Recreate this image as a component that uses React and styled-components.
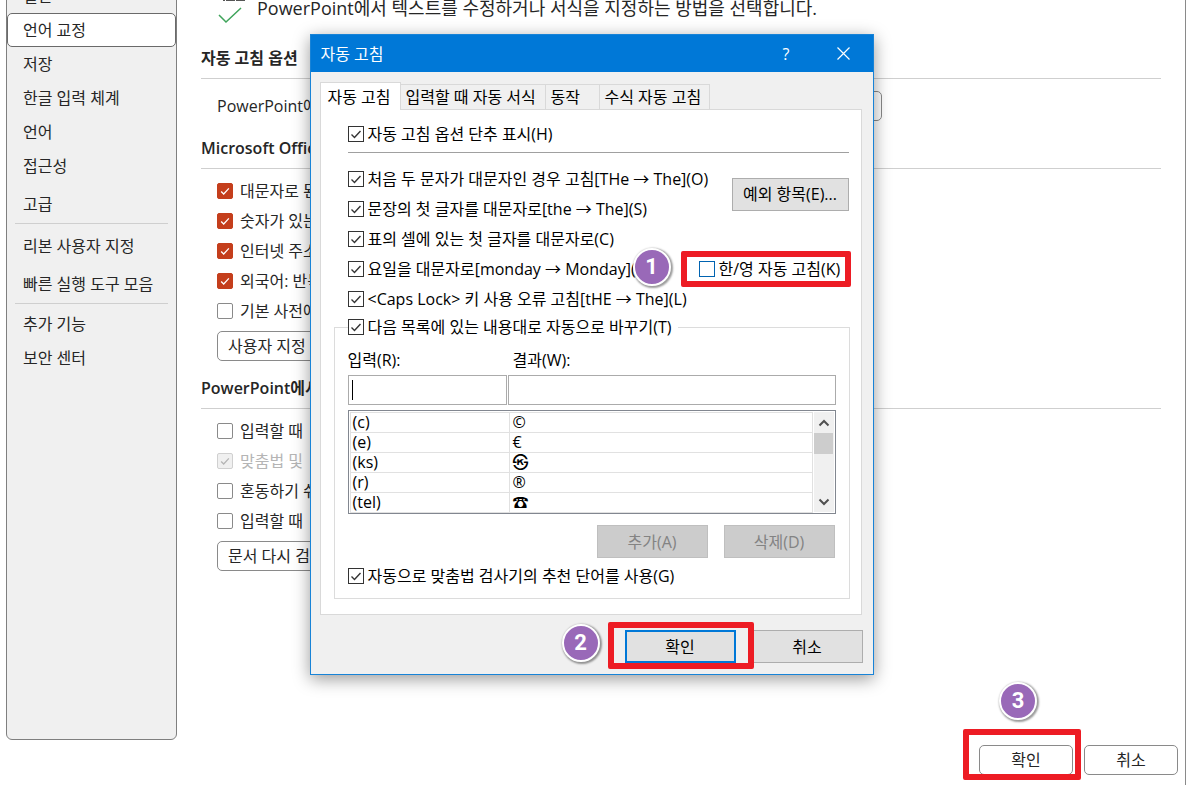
import React from 'react';
import styled, { createGlobalStyle, css } from 'styled-components';

const GlobalStyle = createGlobalStyle`
    *, *::before, *::after {
        box-sizing: border-box;
    }
    body {
        margin: 0;
        background: #fff;
        color: #262626;
        font-family: "Open Sans", "Noto Sans CJK KR", sans-serif;
        font-size: 16px;
        line-height: 24px;
    }
    button, input {
        font: inherit;
        color: inherit;
    }
`;

const Window = styled.div`
    position: relative;
    display: flex;
    flex-direction: column;
    height: 100vh;
    overflow: hidden;
    border-right: 1px solid #8a8a8a;
`;

const Content = styled.div`
    display: flex;
    flex: 1;
    min-height: 0;
`;

/* ---- sidebar ---- */

const Sidebar = styled.nav`
    flex: 0 0 171px;
    margin: -22px 0 0 6px;
    border: 1px solid #7f7f7f;
    border-radius: 6px;
    background: #f0f0f0;
`;

const MenuItem = styled.a`
    display: flex;
    align-items: center;
    height: ${({ $tall }) => ($tall ? '38px' : '34px')};
    margin-top: ${({ $spaced }) => ($spaced ? '2px' : '0')};
    padding-left: 15px;
    color: inherit;
    text-decoration: none;
    white-space: nowrap;
    border: 1px solid transparent;
    ${({ $active }) => $active && css`
        background: #fff;
        border-color: #6a6a6a;
        border-radius: 5px;
    `}
`;

const MenuLine = styled.hr`
    height: 1px;
    margin: 0 8px 3px;
    border: 0;
    background: #cfcfcf;
`;

/* ---- options page ---- */

const Main = styled.main`
    flex: 1;
    min-width: 0;
    margin-top: -12px;
    padding: 0 24px;
`;

const Intro = styled.div`
    display: flex;
    align-items: center;
    gap: 12px;
    height: 40px;
    margin-bottom: 11px;
    padding-left: 16px;
    font-size: 18px;
    white-space: nowrap;
`;

const SectionTitle = styled.h2`
    height: 40px;
    margin: 0 0 ${({ $gap }) => $gap || 7}px;
    border-bottom: 1px solid #cfcfcf;
    font-size: 16px;
    font-weight: 600;
    line-height: 38px;
    white-space: nowrap;
`;

const SectionBody = styled.div`
    margin-bottom: 8px;
    padding-left: 16px;
    white-space: nowrap;
`;

const SplitRow = styled.div`
    display: flex;
    align-items: center;
    justify-content: space-between;
    width: 665px;
    height: 30px;
`;

const OfficeButton = styled.button`
    min-width: 94px;
    height: 30px;
    padding: 0 10px;
    border: 1px solid #8a8a8a;
    border-radius: 5px;
    background: #fff;
    line-height: 28px;
    white-space: nowrap;
`;

const ListButton = styled(OfficeButton)`
    display: block;
    margin-top: 5px;
`;

const Check = styled.label`
    display: flex;
    align-items: center;
    gap: ${({ $office }) => ($office ? '7px' : '4px')};
    height: ${({ $height }) => $height || 30}px;
    white-space: nowrap;
    color: ${({ $muted }) => ($muted ? '#b5b5b5' : 'inherit')};
`;

const tick = (color, width) =>
    `url("data:image/svg+xml,%3Csvg xmlns='http://www.w3.org/2000/svg' viewBox='0 0 14 14'%3E%3Cpath d='M2.5 7.5l3 3 6-6.5' fill='none' stroke='%23${color}' stroke-width='${width}'/%3E%3C/svg%3E")`;

const Box = styled.input`
    appearance: none;
    flex: none;
    width: 16px;
    height: 16px;
    margin: 0;
    border: 1px solid ${({ $focus }) => ($focus ? '#0063b1' : '#333')};
    background: #fff center / 14px 14px no-repeat;
    &:checked {
        background-image: ${tick('333333', 1.4)};
    }
`;

const OfficeBox = styled(Box)`
    border-color: #8a8a8a;
    border-radius: 2px;
    &:checked {
        border-color: #c43e1c;
        background-color: #c43e1c;
        background-image: ${tick('ffffff', 1.5)};
        background-size: 12px 12px;
    }
    &:disabled {
        border-color: #d0d0d0;
        background-color: #f0f0f0;
        background-image: ${tick('b5b5b5', 1.5)};
    }
`;

const Footer = styled.footer`
    display: flex;
    justify-content: flex-end;
    gap: 11px;
    padding: 5px 7px 10px;
`;

/* ---- step marks ---- */

const Marked = styled.div`
    position: relative;
    display: flex;
    ${({ $area }) => $area && css`grid-area: ${$area};`}
`;

const RedFrame = styled.span`
    position: absolute;
    z-index: 2;
    inset: ${({ $inset }) => $inset};
    border: 6px solid #ed1c24;
    border-radius: 2px;
    pointer-events: none;
`;

const Badge = styled.span`
    position: absolute;
    z-index: 3;
    left: ${({ $left }) => $left}px;
    top: ${({ $top }) => $top}px;
    width: 38px;
    height: 38px;
    border: 2px solid #fff;
    border-radius: 50%;
    background: #9969b8;
    box-shadow: 1px 1px 2px 1px rgba(0, 0, 0, .4);
    color: #fff;
    font-family: Roboto, sans-serif;
    font-size: 22px;
    font-weight: 700;
    line-height: 34px;
    text-align: center;
`;

/* ---- dialog ---- */

const Overlay = styled.div`
    position: absolute;
    inset: 0;
    display: flex;
    align-items: flex-start;
    justify-content: center;
    padding: 34px 2px 0 0;
    pointer-events: none;
`;

const Dialog = styled.section`
    width: 564px;
    border: 1px solid #1883d7;
    background: #f0f0f0;
    box-shadow: 0 4px 16px rgba(0, 0, 0, .4);
    color: #000;
    pointer-events: auto;
`;

const TitleBar = styled.header`
    display: flex;
    align-items: center;
    height: 37px;
    padding: 0 1px 0 10px;
    background: #0078d7;
    color: #fff;
`;

const DialogTitle = styled.h1`
    flex: 1;
    margin: 0;
    font-size: 16px;
    font-weight: 400;
`;

const TitleButton = styled.button`
    display: flex;
    align-items: center;
    justify-content: center;
    width: 57px;
    height: 37px;
    padding: 0;
    border: 0;
    background: none;
`;

const DialogBody = styled.div`
    padding: 10px 11px 0 9px;
`;

const Tabs = styled.div`
    display: flex;
    align-items: flex-end;
    height: 27px;
`;

const Tab = styled.button`
    width: ${({ $width }) => $width}px;
    height: 25px;
    padding: 0 5px;
    border: 1px solid #d9d9d9;
    border-width: 1px 1px 0 0;
    background: #f0f0f0;
    line-height: 24px;
    text-align: left;
    white-space: nowrap;
    ${({ $active }) => $active && css`
        z-index: 1;
        height: 28px;
        margin-bottom: -1px;
        padding: 0 7px;
        border-left-width: 1px;
        background: #fff;
    `}
`;

const Panel = styled.div`
    padding: 9px 11px 15px 13px;
    border: 1px solid #d9d9d9;
    background: #fff;
`;

const Options = styled.div`
    padding: 0 1px 0 14px;
`;

const Line = styled.hr`
    height: 1px;
    margin: 3px 0 11px;
    border: 0;
    background: #a0a0a0;
`;

const OptionGrid = styled.div`
    display: grid;
    grid-template-columns: minmax(0, 1fr) 150px;
    grid-auto-rows: 30px;
    > label {
        grid-column: 1;
    }
`;

const DialogButton = styled.button`
    width: ${({ $wide }) => ($wide ? '117px' : '111px')};
    height: 33px;
    padding: 0;
    border: 1px solid #adadad;
    background: #e1e1e1;
    ${({ $primary }) => $primary && css`
        border: 2px solid #0078d7;
    `}
    &:disabled {
        border-color: #bfbfbf;
        background: #ccc;
        color: #838383;
    }
`;

const ExceptionButton = styled(DialogButton)`
    grid-area: 1 / 2 / 3 / 3;
    place-self: center end;
`;

const Group = styled.fieldset`
    min-width: 0;
    margin: 1px 0 0;
    padding: 9px 13px 7px;
    border: 1px solid #dcdcdc;
`;

const Legend = styled.legend`
    padding: 0 6px 0 0;
`;

const Fields = styled.div`
    display: grid;
    grid-template-columns: 159px 1fr;
    column-gap: 1px;
    row-gap: 3px;
`;

const FieldLabel = styled.label`
    padding-left: ${({ $indent }) => $indent || 0}px;
`;

const Field = styled.input`
    width: 100%;
    height: 30px;
    padding: 0 4px;
    border: 1px solid #ababab;
    border-radius: 0;
    background: #fff;
    outline: none;
`;

const TypedField = styled.div`
    display: flex;
    align-items: center;
    height: 30px;
    border: 1px solid #ababab;
    padding-left: 3px;

    &::before {
        content: "";
        flex: none;
        width: 1px;
        height: 20px;
        background: #000;
    }
    input {
        height: 28px;
        padding: 0;
        border: 0;
    }
`;

const ListBox = styled.div`
    display: flex;
    height: 104px;
    margin-top: 5px;
    padding: 1px;
    border: 1px solid #828790;
    overflow: hidden;
`;

const Table = styled.table`
    flex: 1;
    border-collapse: collapse;
    table-layout: fixed;
    width: 100%;
    td {
        height: 20px;
        padding: 0 0 0 2px;
        border: 1px solid #e1e1e1;
        line-height: 19px;
    }
    td:first-child {
        width: 159px;
    }
    td:last-child {
        padding-left: 3px;
    }
`;

const ScrollBar = styled.div`
    display: flex;
    flex-direction: column;
    flex: none;
    width: 20px;
    margin-left: 1px;
    background: #f0f0f0;
`;

const ScrollArrow = styled.button`
    display: flex;
    align-items: center;
    justify-content: center;
    height: 21px;
    padding: 0;
    border: 0;
    background: none;
`;

const Thumb = styled.div`
    width: 19px;
    height: 21px;
    margin-bottom: auto;
    background: #cdcdcd;
`;

const GroupButtons = styled.div`
    display: flex;
    justify-content: flex-end;
    gap: 16px;
    margin: 11px 1px 3px 0;
`;

const DialogFooter = styled.div`
    display: flex;
    justify-content: flex-end;
    gap: 16px;
    padding: 15px 10px 11px;
`;

const menu = [
    ['일반'],
    ['언어 교정', { $active: true }],
    ['저장'],
    ['한글 입력 체계'],
    ['언어'],
    ['접근성'],
    ['고급', { $tall: true, $spaced: true }],
    null,
    ['리본 사용자 지정', { $tall: true }],
    ['빠른 실행 도구 모음', { $tall: true }],
    null,
    ['추가 기능'],
    ['보안 센터'],
];

const officeChecks = [
    { text: '대문자로 된', checked: true },
    { text: '숫자가 있는', checked: true },
    { text: '인터넷 주소', checked: true },
    { text: '외국어: 반복', checked: true },
    { text: '기본 사전에' },
];

const pptChecks = [
    { id: 'spelling', text: '입력할 때' },
    { id: 'hide', text: '맞춤법 및', checked: true, disabled: true },
    { id: 'confused', text: '혼동하기 쉬' },
    { id: 'grammar', text: '입력할 때' },
];

const corrections = [
    '처음 두 문자가 대문자인 경우 고침[THe → The](O)',
    '문장의 첫 글자를 대문자로[the → The](S)',
    '표의 셀에 있는 첫 글자를 대문자로(C)',
    '요일을 대문자로[monday → Monday](N)',
    '<Caps Lock> 키 사용 오류 고침[tHE → The](L)',
];

const entries = [
    ['(c)', '©'],
    ['(e)', '€'],
    ['(ks)', '㉿'],
    ['(r)', '®'],
    ['(tel)', '☎'],
];

const OfficeCheck = ({ text, checked, disabled }) => (
    <Check $office $muted={disabled}>
        <OfficeBox type="checkbox" defaultChecked={checked} disabled={disabled} />
        {text}
    </Check>
);

const DialogCheck = ({ text, height, checked = true, focus }) => (
    <Check $height={height}>
        <Box type="checkbox" defaultChecked={checked} $focus={focus} />
        {text}
    </Check>
);

const ProofIcon = () => (
    <svg width="28" height="40" viewBox="0 0 28 40" fill="none">
        <path d="M6 12.5h2M9 12.5h9M19 12.5h11" stroke="#555" />
        <path d="M2 27l7 7L24 20" stroke="#3fa45b" strokeWidth="1.5" />
    </svg>
);

const Arrow = ({ down }) => (
    <svg width="12" height="8" viewBox="0 0 12 8" fill="none">
        <path d={down ? 'M1.5 1.5L6 6l4.5-4.5' : 'M1.5 6.5L6 2l4.5 4.5'} stroke="#505050" strokeWidth="2" />
    </svg>
);

const AutoCorrectDialog = () => (
    <Dialog role="dialog" aria-labelledby="dialog-title">
        <TitleBar>
            <DialogTitle id="dialog-title">자동 고침</DialogTitle>
            <TitleButton>?</TitleButton>
            <TitleButton aria-label="닫기">
                <svg width="13" height="13" viewBox="0 0 13 13" stroke="#fff" strokeWidth="1.2">
                    <path d="M.5.5l12 12M12.5.5l-12 12" />
                </svg>
            </TitleButton>
        </TitleBar>
        <DialogBody>
            <Tabs role="tablist">
                <Tab role="tab" $active $width={81}>자동 고침</Tab>
                <Tab role="tab" $width={145}>입력할 때 자동 서식</Tab>
                <Tab role="tab" $width={54}>동작</Tab>
                <Tab role="tab" $width={110}>수식 자동 고침</Tab>
            </Tabs>
            <Panel>
                <Options>
                    <DialogCheck text="자동 고침 옵션 단추 표시(H)" />
                    <Line />
                    <OptionGrid>
                        {corrections.map((text) => <DialogCheck key={text} text={text} />)}
                        <ExceptionButton $wide>예외 항목(E)...</ExceptionButton>
                        <Marked $area="4 / 2">
                            <DialogCheck text="한/영 자동 고침(K)" checked={false} focus />
                            <RedFrame $inset="-3px -2px -3px -18px" />
                            <Badge $left={-66} $top={-6}>1</Badge>
                        </Marked>
                    </OptionGrid>
                </Options>
                <Group>
                    <Legend>
                        <DialogCheck text="다음 목록에 있는 내용대로 자동으로 바꾸기(T)" height={24} />
                    </Legend>
                    <Fields>
                        <FieldLabel htmlFor="replace">입력(R):</FieldLabel>
                        <FieldLabel htmlFor="with" $indent={5}>결과(W):</FieldLabel>
                        <TypedField><Field id="replace" /></TypedField>
                        <Field id="with" />
                    </Fields>
                    <ListBox>
                        <Table>
                            <tbody>
                                {entries.map(([from, to]) => (
                                    <tr key={from}>
                                        <td>{from}</td>
                                        <td>{to}</td>
                                    </tr>
                                ))}
                            </tbody>
                        </Table>
                        <ScrollBar>
                            <ScrollArrow aria-label="위로"><Arrow /></ScrollArrow>
                            <Thumb />
                            <ScrollArrow aria-label="아래로"><Arrow down /></ScrollArrow>
                        </ScrollBar>
                    </ListBox>
                    <GroupButtons>
                        <DialogButton disabled>추가(A)</DialogButton>
                        <DialogButton disabled>삭제(D)</DialogButton>
                    </GroupButtons>
                    <DialogCheck text="자동으로 맞춤법 검사기의 추천 단어를 사용(G)" />
                </Group>
            </Panel>
        </DialogBody>
        <DialogFooter>
            <Marked>
                <DialogButton $primary>확인</DialogButton>
                <RedFrame $inset="-8px -18px -6px -17px" />
                <Badge $left={-63} $top={-6}>2</Badge>
            </Marked>
            <DialogButton>취소</DialogButton>
        </DialogFooter>
    </Dialog>
);

const App = () => {
    return (
        <Window>
            <GlobalStyle />
            <Content>
                <Sidebar>
                    {menu.map((item, i) => (
                        item
                            ? <MenuItem key={item[0]} href="#" {...item[1]}>{item[0]}</MenuItem>
                            : <MenuLine key={i} />
                    ))}
                </Sidebar>
                <Main>
                    <Intro>
                        <ProofIcon />
                        PowerPoint에서 텍스트를 수정하거나 서식을 지정하는 방법을 선택합니다.
                    </Intro>
                    <SectionTitle $gap={12}>자동 고침 옵션</SectionTitle>
                    <SectionBody>
                        <SplitRow>
                            PowerPoint에서
                            <OfficeButton>자동 고침 옵션</OfficeButton>
                        </SplitRow>
                    </SectionBody>
                    <SectionTitle>Microsoft Office</SectionTitle>
                    <SectionBody>
                        {officeChecks.map((item) => <OfficeCheck key={item.text} {...item} />)}
                        <ListButton>사용자 지정 사전</ListButton>
                    </SectionBody>
                    <SectionTitle>PowerPoint에서</SectionTitle>
                    <SectionBody>
                        {pptChecks.map((item) => <OfficeCheck key={item.id} {...item} />)}
                        <ListButton>문서 다시 검사</ListButton>
                    </SectionBody>
                </Main>
            </Content>
            <Footer>
                <Marked>
                    <OfficeButton>확인</OfficeButton>
                    <RedFrame $inset="-16px -8px -5px -16px" />
                    <Badge $left={20} $top={-63}>3</Badge>
                </Marked>
                <OfficeButton>취소</OfficeButton>
            </Footer>
            <Overlay>
                <AutoCorrectDialog />
            </Overlay>
        </Window>
    );
}

export default App;
